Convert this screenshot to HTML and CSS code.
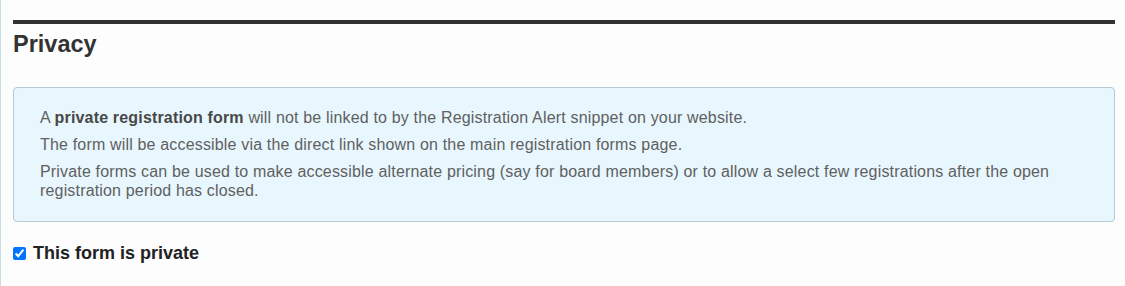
FILE: index.html
```html
<!DOCTYPE html>
<html lang="en">
<head>
<meta charset="utf-8">
<title>Privacy</title>
<link rel="stylesheet" href="styles.css">
</head>
<body>
<div class="page">
  <section class="section">
    <h3 class="section-title">Privacy</h3>
    <div class="info-box">
      <p>A <strong>private registration form</strong> will not be linked to by the Registration Alert snippet on your website.</p>
      <p>The form will be accessible via the direct link shown on the main registration forms page.</p>
      <p>Private forms can be used to make accessible alternate pricing (say for board members) or to allow a select few registrations after the open registration period has closed.</p>
    </div>
    <label class="check-row">
      <input type="checkbox" class="check" checked>
      <span>This form is private</span>
    </label>
  </section>
</div>
</body>
</html>
```

FILE: styles.css
```css
html, body {
  margin: 0;
  padding: 0;
  background: #fdfdfd;
}

body {
  font-family: "Liberation Sans", Arial, sans-serif;
  color: #333;
}

.page {
  min-height: 286px;
  box-sizing: border-box;
  border-left: 1px solid #c9dde6;
  padding: 20px 10px 0 12px;
}

.section-title {
  margin: 0;
  border-top: 4px solid #333;
  padding-top: 6px;
  font-size: 23.5px;
  line-height: 28px;
  font-weight: bold;
  color: #333;
}

.info-box {
  margin-top: 29px;
  background: #e8f7fe;
  border: 1px solid #b4c9d8;
  border-radius: 4px;
  padding: 20px 26px 21px 26px;
  color: #606060;
  font-size: 16px;
  letter-spacing: 0.17px;
  line-height: 19px;
}

.info-box p {
  margin: 0 0 8px 0;
}

.info-box p:last-child {
  margin-bottom: 0;
}

.info-box strong {
  color: #484848;
}

.check-row {
  display: flex;
  align-items: center;
  margin-top: 21px;
  font-size: 18px;
  line-height: 21px;
  font-weight: bold;
  color: #222;
}

.check {
  width: 13px;
  height: 13px;
  margin: 0 7px 0 0;
}
```
